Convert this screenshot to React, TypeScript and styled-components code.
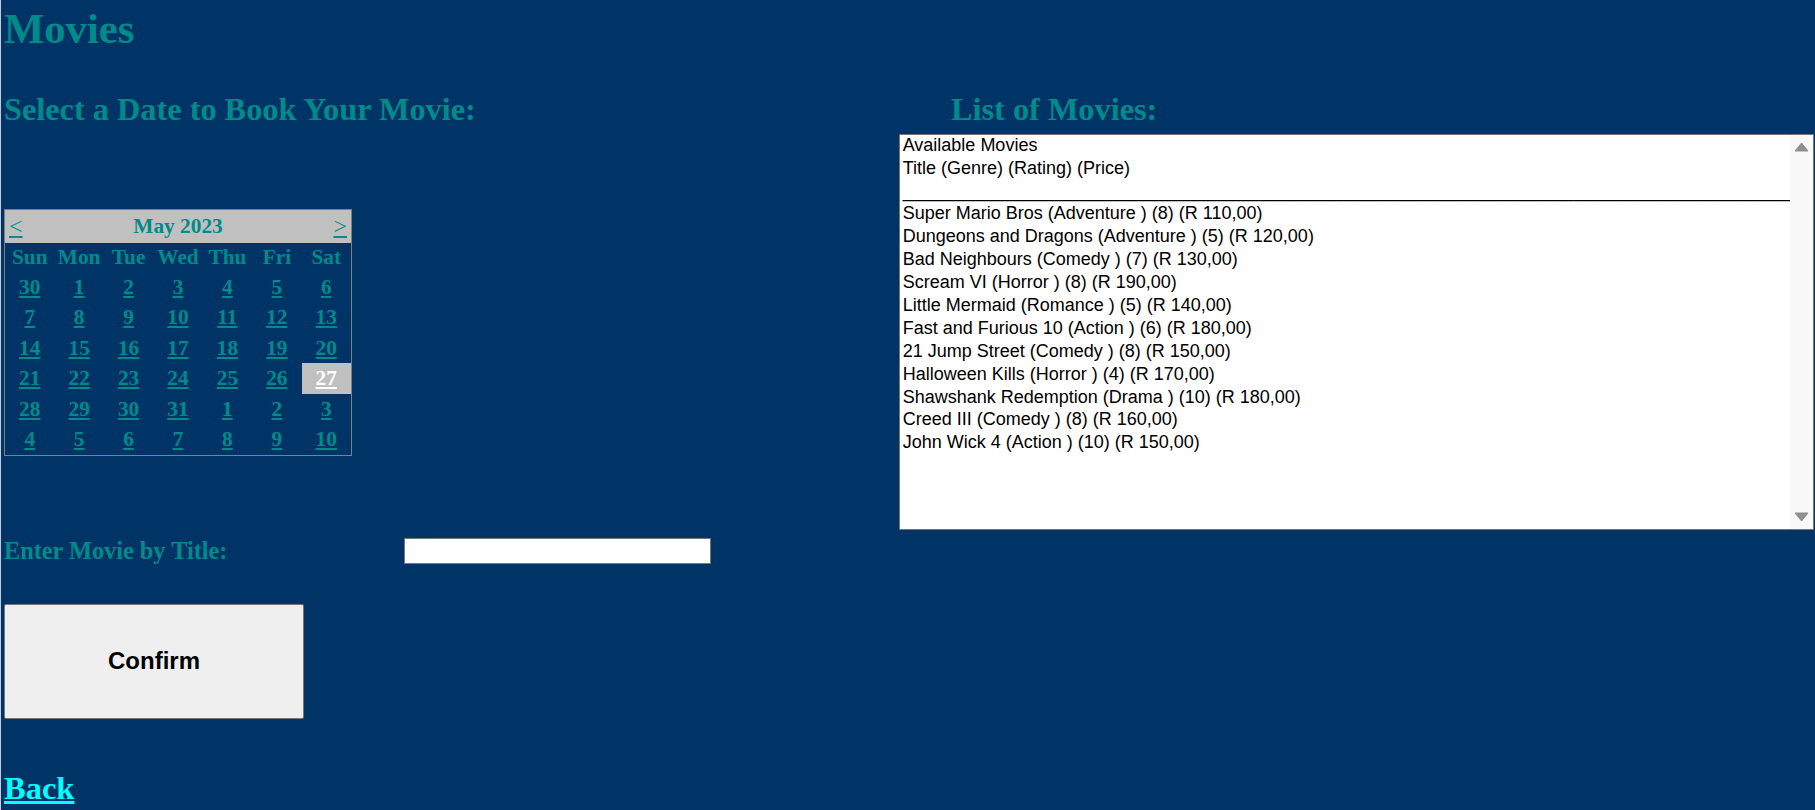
import React from "react";
import styled, { createGlobalStyle } from "styled-components";

const TEAL = "#008b8b";

const GlobalStyle = createGlobalStyle`
  html, body {
    margin: 0;
    padding: 0;
    background: #003366;
  }
  body {
    font-family: "Liberation Serif", "Times New Roman", serif;
  }
`;

const Page = styled.div`
  width: 1815px;
  height: 810px;
  box-sizing: border-box;
  padding: 4px 1px 0 3px;
  border-left: 1px solid #c8ccd2;
  background: #003366;
  overflow: hidden;
`;

const Title = styled.h1`
  margin: 0;
  font-size: 42.67px;
  font-weight: bold;
  line-height: normal;
  color: ${TEAL};
`;

const Columns = styled.div`
  display: grid;
  grid-template-columns: 895px 915px;
  margin-top: 38px;
`;

const Column = styled.div`
  display: flex;
  flex-direction: column;
  align-items: flex-start;
`;

const SectionHeading = styled.h2<{ $indent?: number }>`
  margin: 0 0 0 ${(p) => p.$indent ?? 0}px;
  font-size: 32.3px;
  font-weight: bold;
  line-height: 36.8px;
  color: ${TEAL};
`;

/* ---------- Calendar ---------- */

const Calendar = styled.div`
  margin-top: 81px;
  width: 348px;
  box-sizing: border-box;
  border: 1px solid #808080;
  font-size: 21.33px;
  font-weight: bold;
  color: ${TEAL};
`;

const CalHeader = styled.div`
  display: flex;
  justify-content: space-between;
  align-items: center;
  height: 33px;
  padding: 0 4px;
  background: #c0c0c0;
`;

const NavLink = styled.a`
  color: ${TEAL};
  font-size: 24px;
  font-weight: normal;
  text-decoration: underline;
  cursor: pointer;
`;

const MonthLabel = styled.span`
  color: ${TEAL};
`;

const DayGrid = styled.div`
  display: grid;
  grid-template-columns: repeat(7, 1fr);
  grid-template-rows: 29px repeat(6, 30.5px);
`;

const DayName = styled.div`
  display: flex;
  align-items: center;
  justify-content: center;
`;

const DateCell = styled.div<{ $selected?: boolean }>`
  display: flex;
  align-items: center;
  justify-content: center;
  background: ${(p) => (p.$selected ? "#c0c0c0" : "transparent")};
`;

const DateLink = styled.a<{ $selected?: boolean }>`
  color: ${(p) => (p.$selected ? "#ffffff" : TEAL)};
  text-decoration: underline;
  cursor: pointer;
`;

/* ---------- Form ---------- */

const FieldRow = styled.div`
  display: flex;
  align-items: center;
  margin-top: 82px;
`;

const FieldLabel = styled.label`
  width: 400px;
  font-size: 24.3px;
  font-weight: bold;
  line-height: 26px;
  color: ${TEAL};
`;

const TextInput = styled.input`
  width: 307px;
  height: 26px;
  box-sizing: border-box;
  margin: 0;
  border: 1px solid #767676;
  background: #ffffff;
  padding: 1px 3px;
  font-family: "Liberation Sans", Arial, sans-serif;
  font-size: 17.78px;
`;

const ConfirmButton = styled.button`
  margin-top: 40px;
  width: 300px;
  height: 115px;
  box-sizing: border-box;
  border: 1px solid #767676;
  border-radius: 2px;
  background: #efefef;
  font-family: "Liberation Sans", Arial, sans-serif;
  font-size: 24px;
  font-weight: bold;
  color: #000000;
  cursor: pointer;
`;

const BackLink = styled.a`
  margin-top: 51px;
  font-size: 32.5px;
  font-weight: bold;
  line-height: normal;
  color: #00ffff;
  text-decoration: underline;
  cursor: pointer;
`;

/* ---------- Listbox ---------- */

const ListBox = styled.div`
  margin-top: 6px;
  width: 915px;
  height: 396px;
  box-sizing: border-box;
  border: 1px solid #767676;
  background: #ffffff;
  display: flex;
`;

const ListArea = styled.div`
  flex: 1;
  min-width: 0;
  overflow: hidden;
  font-family: "Liberation Sans", Arial, sans-serif;
  font-size: 18px;
  color: #000000;
`;

const Option = styled.div`
  height: 22.9px;
  padding: 0 2.67px;
  line-height: 20.6px;
  white-space: nowrap;
  overflow: hidden;
`;

const ScrollTrack = styled.div`
  width: 23px;
  background: #f8f8f8;
  display: flex;
  flex-direction: column;
  justify-content: space-between;
  align-items: center;
  padding: 7px 0;
  box-sizing: border-box;
`;

const Arrow = ({ down }: { down?: boolean }) => (
  <svg width="15" height="10" viewBox="0 0 15 10">
    <path
      d={down ? "M1 1 L14 1 L7.5 9 Z" : "M1 9 L14 9 L7.5 1 Z"}
      fill="#8f8f8f"
      stroke="#8f8f8f"
      strokeWidth="1"
      strokeLinejoin="round"
    />
  </svg>
);

const movies = [
  "Super Mario Bros (Adventure ) (8) (R 110,00)",
  "Dungeons and Dragons (Adventure ) (5) (R 120,00)",
  "Bad Neighbours (Comedy ) (7) (R 130,00)",
  "Scream VI (Horror ) (8) (R 190,00)",
  "Little Mermaid (Romance ) (5) (R 140,00)",
  "Fast and Furious 10 (Action ) (6) (R 180,00)",
  "21 Jump Street (Comedy ) (8) (R 150,00)",
  "Halloween Kills (Horror ) (4) (R 170,00)",
  "Shawshank Redemption (Drama ) (10) (R 180,00)",
  "Creed III (Comedy ) (8) (R 160,00)",
  "John Wick 4 (Action ) (10) (R 150,00)",
];

const dayNames = ["Sun", "Mon", "Tue", "Wed", "Thu", "Fri", "Sat"];
const dates = [
  30, 1, 2, 3, 4, 5, 6,
  7, 8, 9, 10, 11, 12, 13,
  14, 15, 16, 17, 18, 19, 20,
  21, 22, 23, 24, 25, 26, 27,
  28, 29, 30, 31, 1, 2, 3,
  4, 5, 6, 7, 8, 9, 10,
];
const SELECTED_INDEX = 27;

export default function App() {
  return (
    <>
      <GlobalStyle />
      <Page>
        <Title>Movies</Title>
        <Columns>
          <Column>
            <SectionHeading>Select a Date to Book Your Movie:</SectionHeading>
            <Calendar>
              <CalHeader>
                <NavLink>&lt;</NavLink>
                <MonthLabel>May 2023</MonthLabel>
                <NavLink>&gt;</NavLink>
              </CalHeader>
              <DayGrid>
                {dayNames.map((d) => (
                  <DayName key={d}>{d}</DayName>
                ))}
                {dates.map((d, i) => (
                  <DateCell key={i} $selected={i === SELECTED_INDEX}>
                    <DateLink $selected={i === SELECTED_INDEX}>{d}</DateLink>
                  </DateCell>
                ))}
              </DayGrid>
            </Calendar>
            <FieldRow>
              <FieldLabel htmlFor="title">Enter Movie by Title:</FieldLabel>
              <TextInput id="title" type="text" />
            </FieldRow>
            <ConfirmButton>Confirm</ConfirmButton>
            <BackLink>Back</BackLink>
          </Column>
          <Column>
            <SectionHeading $indent={52}>List of Movies:</SectionHeading>
            <ListBox role="listbox">
              <ListArea>
                <Option>Available Movies</Option>
                <Option>Title (Genre) (Rating) (Price)</Option>
                <Option>{"_".repeat(110)}</Option>
                {movies.map((m) => (
                  <Option key={m}>{m}</Option>
                ))}
              </ListArea>
              <ScrollTrack>
                <Arrow />
                <Arrow down />
              </ScrollTrack>
            </ListBox>
          </Column>
        </Columns>
      </Page>
    </>
  );
}
